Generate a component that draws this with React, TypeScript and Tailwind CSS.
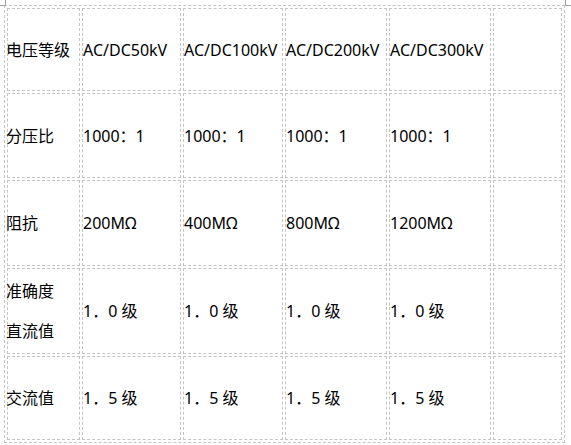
const rows: { label: string[]; cells: string[]; h: string }[] = [
  { label: ["电压等级"], cells: ["AC/DC50kV", "AC/DC100kV", "AC/DC200kV", "AC/DC300kV"], h: "h-[83px]" },
  { label: ["分压比"], cells: ["1000：1", "1000：1", "1000：1", "1000：1"], h: "h-[85px]" },
  { label: ["阻抗"], cells: ["200MΩ", "400MΩ", "800MΩ", "1200MΩ"], h: "h-[86px]" },
  { label: ["准确度", "直流值"], cells: ["1．0 级", "1．0 级", "1．0 级", "1．0 级"], h: "h-[86px]" },
  { label: ["交流值"], cells: ["1．5 级", "1．5 级", "1．5 级", "1．5 级"], h: "h-[84px]" },
]

const widths = ["w-[73px]", "w-[99px]", "w-[100px]", "w-[102px]", "w-[102px]", "w-[69px]"]

const cell = "border border-dashed border-[#c4c4c4] p-0 align-middle whitespace-nowrap"

export default function App() {
  return (
    <div
      className="relative w-[571px] h-[445px] bg-white text-black text-[16px] overflow-hidden"
      style={{ fontFamily: '"Noto Sans", "Noto Sans CJK SC", sans-serif' }}
    >
      {/* page corner marks */}
      <div className="absolute left-0 top-[5px] w-[6px] h-px bg-[#a0a0a0]" />
      <div className="absolute left-[5px] top-0 w-px h-[6px] bg-[#a0a0a0]" />
      <div className="absolute left-[565px] top-[5px] w-[6px] h-px bg-[#a0a0a0]" />
      <div className="absolute left-[565px] top-0 w-px h-[6px] bg-[#a0a0a0]" />

      <table className="ml-[4px] mt-[5px] w-[561px] table-fixed border-separate border-spacing-[2px] border border-dashed border-[#c4c4c4]">
        <colgroup>
          {widths.map((w, i) => (
            <col key={i} className={w} />
          ))}
        </colgroup>
        <tbody>
          {rows.map((r, i) => (
            <tr key={i} className={r.h}>
              <td className={cell}>
                {r.label.map((l, j) => (
                  <div key={j} className={"-ml-[2px] " + (r.label.length > 1 ? "leading-[40px]" : "leading-[24px]")}>
                    {l}
                  </div>
                ))}
              </td>
              {r.cells.map((c, j) => (
                <td key={j} className={cell}>
                  {c}
                </td>
              ))}
              <td className={cell} />
            </tr>
          ))}
        </tbody>
      </table>
    </div>
  )
}
